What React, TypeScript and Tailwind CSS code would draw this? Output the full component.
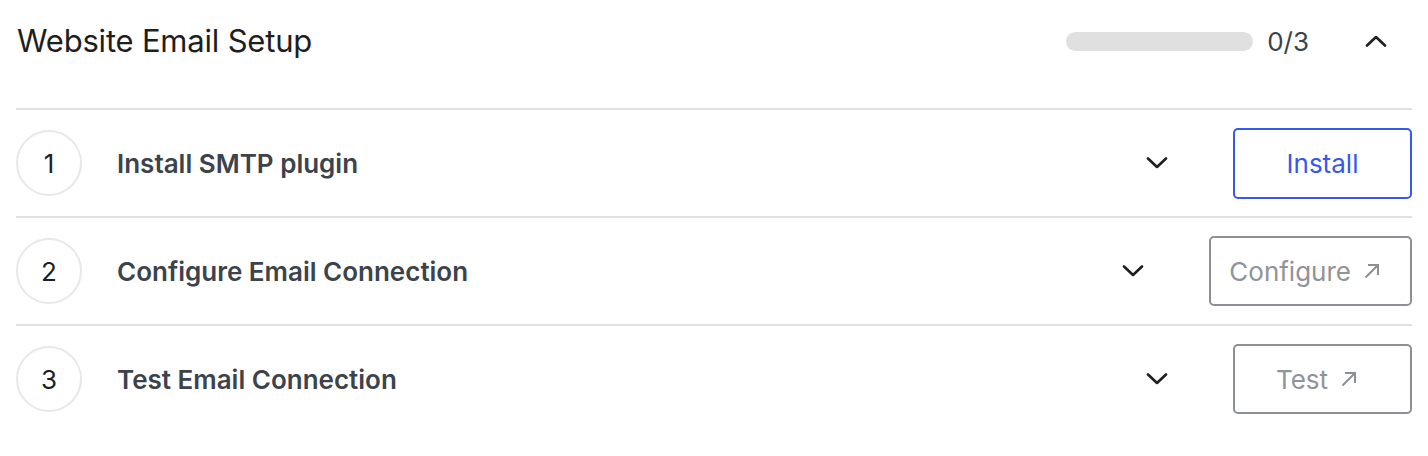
import React from 'react';

type Step = {
  num: number;
  title: string;
  action: string;
  primary?: boolean;
  external?: boolean;
};

const STEPS: Step[] = [
  { num: 1, title: 'Install SMTP plugin', action: 'Install', primary: true },
  { num: 2, title: 'Configure Email Connection', action: 'Configure', external: true },
  { num: 3, title: 'Test Email Connection', action: 'Test', external: true },
];

const Chevron: React.FC<{ up?: boolean }> = ({ up }) => (
  <svg width="22" height="12" viewBox="0 0 22 12" fill="none" className="shrink-0">
    <polyline
      points={up ? '2,10.5 11,2 20,10.5' : '2,1.5 11,10 20,1.5'}
      stroke="#1e1e1e"
      strokeWidth="2.6"
      strokeLinecap="round"
      strokeLinejoin="round"
    />
  </svg>
);

// small ↗ arrow, drawn centred in a 24px box
const ExternalArrow: React.FC = () => (
  <svg width="24" height="24" viewBox="0 0 24 24" fill="none" className="shrink-0">
    <path d="M5.5 18.5 L18 6 M8 6 H18 V16" stroke="#8c8f94" strokeWidth="2" />
  </svg>
);

const StepRow: React.FC<{ step: Step }> = ({ step }) => (
  <div className="flex h-[108px] items-center border-t-2 border-[#e0e0e0]">
    <div className="flex h-[66px] w-[66px] shrink-0 items-center justify-center rounded-full border-2 border-[#e8e8e8] text-[26px] text-[#1e1e1e]">
      {step.num}
    </div>
    <div className="ml-[35px] flex-1 text-[26px] font-semibold text-[#3c434a]">{step.title}</div>
    <div className="mr-[65px]">
      <Chevron />
    </div>
    {step.primary ? (
      <button className="flex h-[71px] min-w-[179px] items-center justify-center rounded-[5px] border-2 border-[#3858e9] px-[18px] text-[26px] text-[#3858e9]">
        {step.action}
      </button>
    ) : (
      <button className="flex h-[70px] min-w-[179px] items-center justify-center gap-[9px] rounded-[5px] border-2 border-[#8c8f94] pl-[18px] pr-[26px] text-[26px] text-[#909397]">
        {step.action}
        {step.external && <ExternalArrow />}
      </button>
    )}
  </div>
);

const App: React.FC = () => {
  return (
    <div className="h-[456px] w-[1428px] bg-white px-4 font-['Inter',sans-serif]">
      <div className="flex h-[82px] items-center">
        <h1 className="flex-1 pl-[1px] text-[31px] font-normal tracking-[-0.2px] text-[#1e1e1e]">Website Email Setup</h1>
        <div className="h-[19px] w-[187px] rounded-full bg-[#e0e0e0]" />
        <span className="ml-[14px] text-[26px] text-[#3c434a]">0/3</span>
        <div className="ml-[56px] mr-[25px]">
          <Chevron up />
        </div>
      </div>
      <div className="mt-[26px]">
        {STEPS.map(s => (
          <StepRow key={s.num} step={s} />
        ))}
      </div>
    </div>
  );
};

export default App;
